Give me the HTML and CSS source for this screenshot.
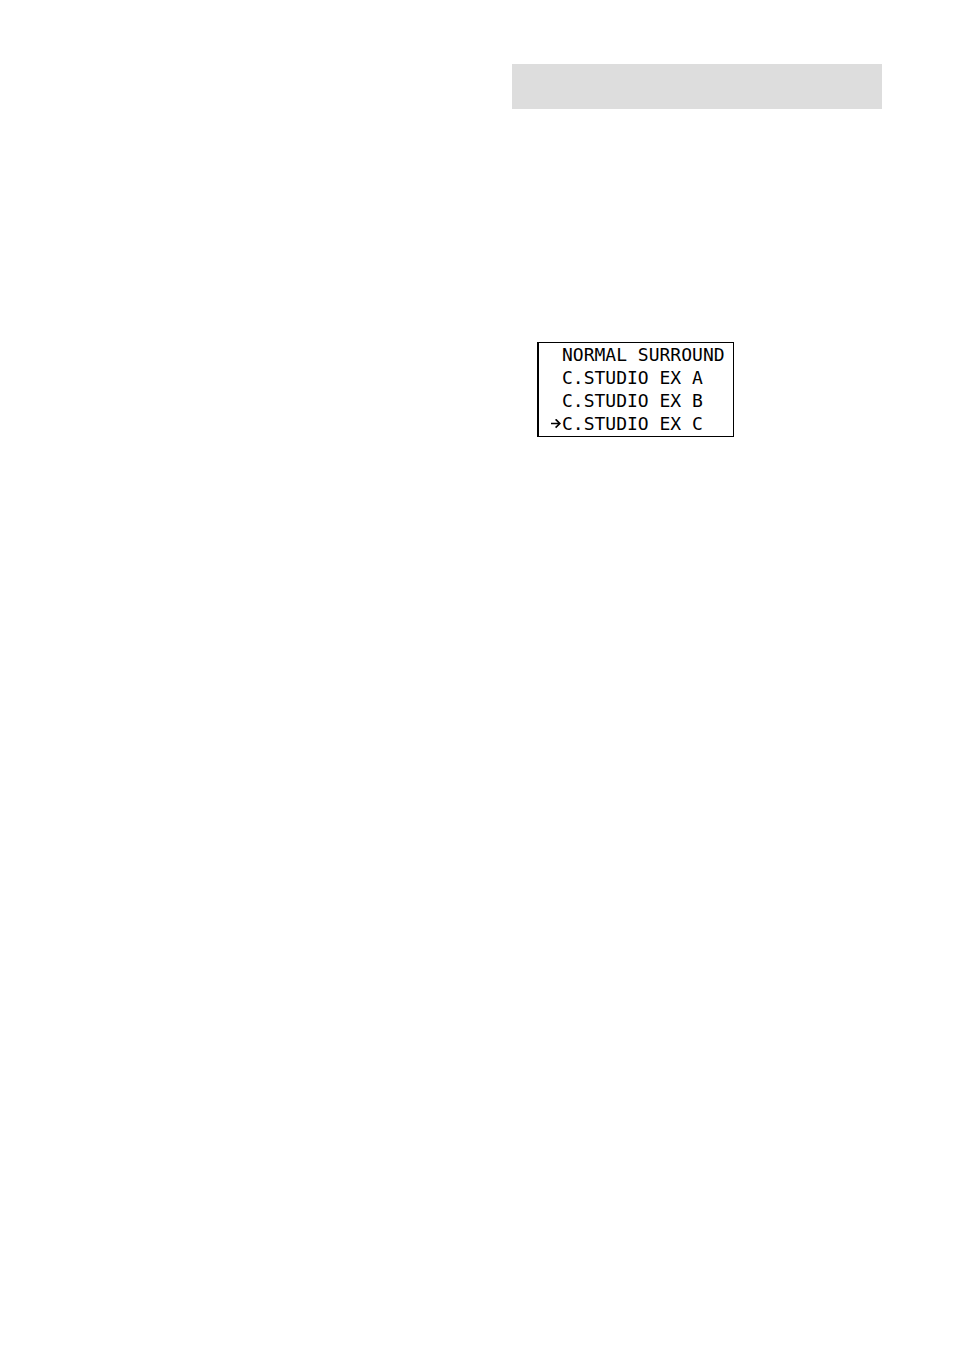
FILE: index.html
```html
<!DOCTYPE html>
<html lang="en">
<head>
    <meta charset="UTF-8">
    <meta name="viewport" content="width=device-width, initial-scale=1.0">
    <title>Surround Modes</title>
    <link rel="stylesheet" href="styles.css">
</head>
<body>
    <main class="page">
        <div class="column"></div>
        <div class="column">
            <div class="banner"></div>
            <ul class="display">
                <li>NORMAL SURROUND</li>
                <li>C.STUDIO EX A</li>
                <li>C.STUDIO EX B</li>
                <li class="selected">
                    <svg class="arrow" viewBox="0 0 10 10" aria-hidden="true">
                        <path d="M0 4.5H8.8M4.6 0.3L8.9 4.5L4.6 8.7" fill="none" stroke="#000" stroke-width="1.7"/>
                    </svg>
                    C.STUDIO EX C
                </li>
            </ul>
        </div>
    </main>
</body>
</html>
```

FILE: styles.css
```css
body {
    margin: 0;
    background-color: #fff;
    color: #000;
}
.page {
    display: grid;
    grid-template-columns: 1fr 1fr;
    gap: 70px;
    padding: 64px 72px;
}
.banner {
    height: 45px;
    background-color: #ddd;
}
.display {
    width: fit-content;
    margin: 233px 0 0 25px;
    padding: 0 8px 1px 12px;
    border: 1px solid #000;
    border-left-width: 2px;
    list-style: none;
    font-family: "DejaVu Sans Mono", monospace;
    font-size: 18px;
    line-height: 23px;
}
.display li {
    padding-left: 11px;
    white-space: nowrap;
}
.display .selected {
    display: flex;
    align-items: center;
    gap: 1px;
    padding-left: 0;
}
.arrow {
    width: 10px;
    height: 10px;
}
```
